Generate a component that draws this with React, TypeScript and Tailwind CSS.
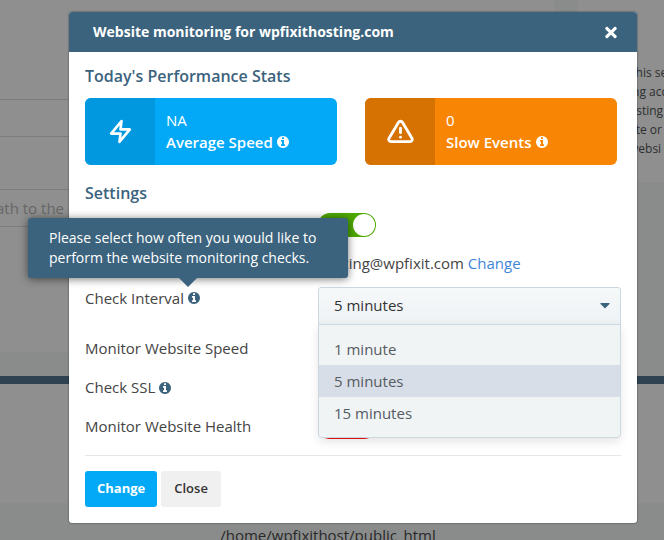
import React, { useState } from "react";
import { FaCaretDown, FaTimes } from "react-icons/fa";
import { FiAlertTriangle, FiZap } from "react-icons/fi";

const INTERVALS = ["1 minute", "5 minutes", "15 minutes"];

function InfoIcon({ className }: { className?: string }) {
  return (
    <svg viewBox="0 0 1536 1536" fill="currentColor" aria-hidden="true" className={"size-3 shrink-0 " + (className || "")}>
      <path d="M1024 1248v-160q0-14-9-23t-23-9h-96v-512q0-14-9-23t-23-9h-320q-14 0-23 9t-9 23v160q0 14 9 23t23 9h96v320h-96q-14 0-23 9t-9 23v160q0 14 9 23t23 9h448q14 0 23-9t9-23zM896 352v-160q0-14-9-23t-23-9h-192q-14 0-23 9t-9 23v160q0 14 9 23t23 9h192q14 0 23-9t9-23zM1536 768q0 209-103 385.5t-279.5 279.5-385.5 103-385.5-103-279.5-279.5-103-385.5 103-385.5 279.5-279.5 385.5-103 385.5 103 279.5 279.5 103 385.5z" />
    </svg>
  );
}

function PageBehind() {
  return (
    <div className="min-h-screen bg-[#f6faf8] overflow-hidden">
      <div className="flex items-start gap-6">
        <div className="flex-1 h-[352px] bg-white pt-[99px]">
          <input
            type="text"
            aria-label="Domain"
            className="block w-full h-[38px] border-y border-[#d8dfdf] outline-none"
          />
          <input
            type="text"
            aria-label="Path"
            placeholder="ath to the existing folder"
            className="block w-full h-[38px] mt-[52px] border-y border-[#d8dfdf] -indent-1 text-[15px] placeholder:text-[#b8b8b8] outline-none"
          />
        </div>
        <div className="w-[86px] h-[182px] bg-white pt-[63px] pl-[51px] text-xs leading-[19px] text-[#505458] whitespace-nowrap overflow-hidden">
          <p>This se</p>
          <p>ing acc</p>
          <p>osting</p>
          <p>ate or</p>
          <p>websi</p>
        </div>
      </div>
      <div className="h-2 mt-6 bg-[#527690]" />
      <div className="h-[119px] bg-white" />
      <p className="pt-5 pr-2 text-center text-[15px] leading-6 text-[#4a4a4a]">/home/wpfixithost/public_html</p>
    </div>
  );
}

function StatCard({
  icon,
  value,
  label,
  className,
  iconClassName
}: {
  icon: React.ReactNode;
  value: string;
  label: string;
  className: string;
  iconClassName: string;
}) {
  return (
    <div className={"flex h-[67px] rounded-md overflow-hidden text-white " + className}>
      <div className={"w-[70px] flex items-center justify-center " + iconClassName}>{icon}</div>
      <div className="pl-[11px] pt-[11px] text-[15px] leading-[22px]">
        <p>{value}</p>
        <p className="flex items-center gap-1 font-semibold">
          {label}
          <InfoIcon />
        </p>
      </div>
    </div>
  );
}

function Toggle({ label, checked }: { label: string; checked: boolean }) {
  const [on, setOn] = useState(checked);
  return (
    <label className={"flex w-[58px] h-6 rounded-full p-px cursor-pointer " + (on ? "bg-[#4ea800] justify-end" : "bg-[#e81414]")}>
      <input type="checkbox" className="sr-only" aria-label={label} checked={on} onChange={e => setOn(e.target.checked)} />
      <span className="size-[22px] rounded-full bg-white" />
    </label>
  );
}

function Row({ label, info, children }: { label?: string; info?: boolean; children: React.ReactNode }) {
  return (
    <div className="flex items-center h-[39px]">
      <div className="w-[233px] flex items-center gap-1">
        {label}
        {info && <InfoIcon className="text-[#3b637d]" />}
      </div>
      {children}
    </div>
  );
}

export default function App() {
  const [interval, setInterval] = useState("5 minutes");

  return (
    <div className="relative font-['Open_Sans','Noto_Sans',sans-serif] text-[15px] text-[#444444]">
      <PageBehind />

      <div className="absolute inset-0 bg-black/44 pt-3 pl-[69px] pr-[27px] overflow-hidden">
        <div role="dialog" aria-labelledby="modal-title" className="bg-white rounded-[3px] shadow-[0_0_2px_rgba(0,0,0,0.6)]">
          <div className="flex items-center justify-between h-10 pl-6 pr-5 rounded-t-[3px] bg-[#3b637d] text-white">
            <h1 id="modal-title" className="text-sm font-bold">Website monitoring for wpfixithosting.com</h1>
            <button type="button" aria-label="Close dialog">
              <FaTimes size={17} className="w-3" />
            </button>
          </div>

          <div className="px-4 pt-3 pb-4">
            <h2 className="text-base leading-6 font-semibold text-[#3b637d]">Today's Performance Stats</h2>
            <div className="grid grid-cols-2 gap-7 mt-[10px] pr-1">
              <StatCard
                icon={<FiZap size={25} strokeWidth={2.5} />}
                value="NA"
                label="Average Speed"
                className="bg-[#03a9f7]"
                iconClassName="bg-[#0298df]"
              />
              <StatCard
                icon={<FiAlertTriangle size={27} strokeWidth={2.5} />}
                value="0"
                label="Slow Events"
                className="bg-[#f98504]"
                iconClassName="bg-[#d57202]"
              />
            </div>

            <h2 className="mt-4 text-base leading-6 font-semibold text-[#3b637d]">Settings</h2>
            <Row>
              <Toggle label="Monitoring" checked={true} />
            </Row>
            <Row>
              <span>
                hosting@wpfixit.com <a href="#" className="text-[#3f86d8]">Change</a>
              </span>
            </Row>

            <div className="flex h-[46px] pt-[3px]">
              <div className="w-[233px]">
                <div className="relative inline-flex items-center gap-1 h-6">
                  <label htmlFor="interval">Check Interval</label>
                  <InfoIcon className="text-[#3b637d]" />
                  <div
                    role="tooltip"
                    className="absolute bottom-full -left-[57px] mb-2 w-[320px] z-20 px-[21px] py-[10px] rounded-[3px] bg-[#3b637d] text-white text-sm leading-5 font-medium shadow-[0_1px_8px_rgba(0,0,0,0.55)]"
                  >
                    Please select how often you would like to perform the website monitoring checks.
                    <span className="absolute top-full left-[151px] border-x-[9px] border-t-[9px] border-x-transparent border-t-[#3b637d]" />
                  </div>
                </div>
              </div>
              <div className="relative flex-1 mt-px">
                <select
                  id="interval"
                  value={interval}
                  onChange={e => setInterval(e.target.value)}
                  className="block w-full h-[38px] px-[15px] pb-px appearance-none rounded-t-[3px] border border-[#ccd8e0] bg-linear-to-b from-[#f6f9fa] to-[#eef2f4] text-[15px] text-[#333333] outline-none"
                >
                  {INTERVALS.map(i => <option key={i}>{i}</option>)}
                </select>
                <FaCaretDown size={16} className="absolute right-2 top-[10px] text-[#3b637d] pointer-events-none" />
                <ul
                  role="listbox"
                  aria-label="Check Interval"
                  className="absolute top-[37px] inset-x-0 z-10 py-2 border border-[#ccd8e0] rounded-b-[4px] bg-[#f0f4f5] shadow-[0_4px_10px_rgba(0,0,0,0.1)]"
                >
                  {INTERVALS.map(i => (
                    <li
                      key={i}
                      role="option"
                      aria-selected={i === interval}
                      onClick={() => setInterval(i)}
                      className={"px-[15px] h-8 leading-8 cursor-pointer text-[#555b62] " + (i === interval ? "bg-[#d8dee7]" : "")}
                    >
                      {i}
                    </li>
                  ))}
                </ul>
              </div>
            </div>

            <Row label="Monitor Website Speed">
              <Toggle label="Monitor Website Speed" checked={false} />
            </Row>
            <Row label="Check SSL" info>
              <Toggle label="Check SSL" checked={false} />
            </Row>
            <Row label="Monitor Website Health">
              <Toggle label="Monitor Website Health" checked={false} />
            </Row>

            <div className="flex gap-1 mt-[9px] pt-[15px] border-t border-[#e6e6e6]">
              <button type="button" className="h-9 px-3 rounded-[3px] bg-[#03a9f7] text-white text-[13px] font-bold">Change</button>
              <button type="button" className="h-9 px-[13px] rounded-[3px] bg-[#f0f0f0] text-[#333333] text-[13px] font-semibold">Close</button>
            </div>
          </div>
        </div>
      </div>
    </div>
  );
}
